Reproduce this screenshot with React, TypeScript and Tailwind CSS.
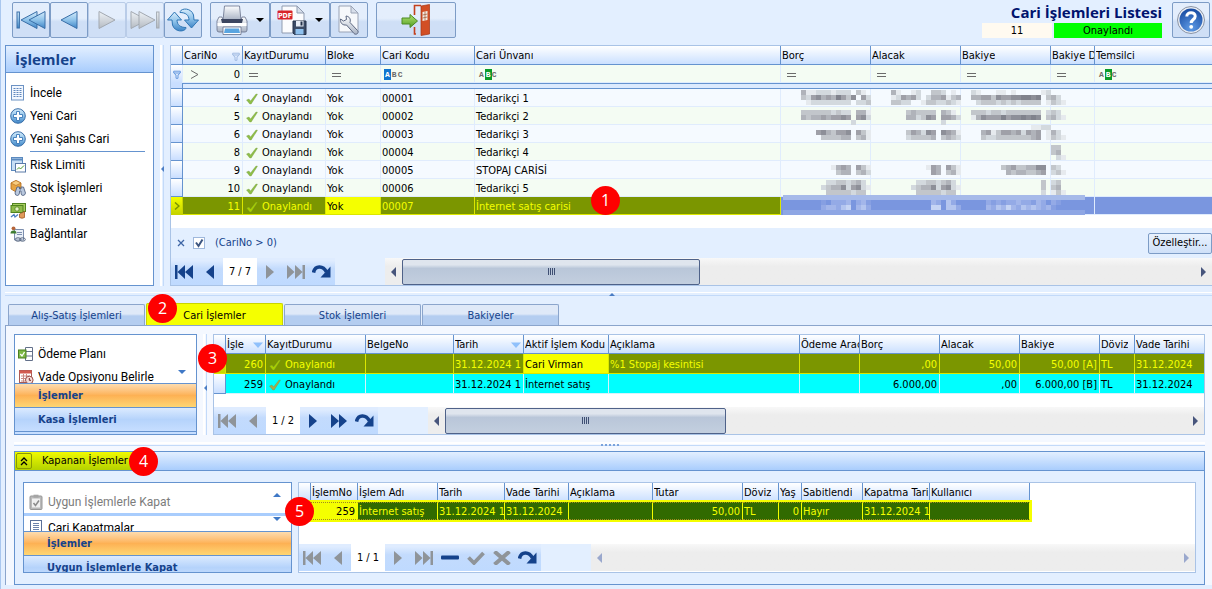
import clsx from "clsx";
import type { ReactNode } from "react";

type Children = { children?: ReactNode };

/* ---------- icons ---------- */

const Check = ({ className = "text-[#8fbf48]" }: { className?: string }) => (
  <svg viewBox="0 0 12 12" className={clsx("size-3 shrink-0", className)}>
    <path d="M.5 7 L3 6 L4.500 8 L10 1 L11.500 1.200 L5.200 11 L3.800 11 Z" fill="currentColor" stroke="#6b8f3a" strokeOpacity=".45" strokeWidth=".7" />
  </svg>
);

const Funnel = ({ className }: { className?: string }) => (
  <svg viewBox="0 0 8 9" className={clsx("w-2 h-[9px] shrink-0", className)}>
    <path d="M.7 1.2 H7.3 V3 L5 5 V8.3 H3 V5 L.7 3 Z M1 3 H7" fill="#dbe8fb" stroke="currentColor" strokeWidth=".9" />
  </svg>
);

const SortDown = () => (
  <svg viewBox="0 0 10 6" className="w-2.5 h-1.5 shrink-0">
    <path d="M0 .5 H10 L5 6 Z" fill="#8fc0fb" />
  </svg>
);

const NavFirst = () => (
  <svg viewBox="0 0 18 14" className="w-[18px] h-3.5" fill="currentColor">
    <path d="M0 0 H2.500 V14 H0 Z M10 0 V14 L2.500 7 Z M18 0 V14 L10 7 Z" />
  </svg>
);
const NavPrev = () => (
  <svg viewBox="0 0 8 14" className="w-2 h-3.5" fill="currentColor">
    <path d="M8 0 V14 L0 7 Z" />
  </svg>
);
const NavNext = () => (
  <svg viewBox="0 0 8 14" className="w-2 h-3.5" fill="currentColor">
    <path d="M0 0 V14 L8 7 Z" />
  </svg>
);
const NavFast = () => (
  <svg viewBox="0 0 16 14" className="w-4 h-3.5" fill="currentColor">
    <path d="M0 0 V14 L8 7 Z M8 0 V14 L16 7 Z" />
  </svg>
);
const NavLast = () => (
  <svg viewBox="0 0 18 14" className="w-[18px] h-3.5" fill="currentColor">
    <path d="M18 0 H15.500 V14 H18 Z M0 0 V14 L7.500 7 Z M8 0 V14 L15.500 7 Z" />
  </svg>
);
const NavUndo = () => (
  <svg viewBox="0 0 20 14" className="w-5 h-3.5">
    <path d="M1.500 7.500 C3 .5 11 0 14.500 7" fill="none" stroke="currentColor" strokeWidth="3.600" />
    <path d="M18.500 1.500 V12.500 H8.500 Z" fill="currentColor" />
  </svg>
);
const NavMinus = () => (
  <svg viewBox="0 0 18 14" className="w-[18px] h-3.5">
    <rect y="4.500" width="18" height="4" rx="1" fill="currentColor" />
  </svg>
);
const NavCheck = () => (
  <svg viewBox="0 0 18 14" className="w-[18px] h-3.5">
    <path d="M1.500 6.500 L7 12 L16.500 2" fill="none" stroke="currentColor" strokeWidth="3.800" />
  </svg>
);
const NavCross = () => (
  <svg viewBox="0 0 18 14" className="w-[18px] h-3.5">
    <path d="M1.500 .5 L16.500 13.500 M16.500 .5 L1.500 13.500" stroke="currentColor" strokeWidth="4" />
  </svg>
);

/* shared fills for the bigger drawings */
const Defs = () => (
  <svg className="absolute w-0 h-0" aria-hidden="true">
    <defs>
      <linearGradient id="blue" x1="0" y1="0" x2="0" y2="1">
        <stop offset="0" stopColor="#d6ecfb" />
        <stop offset=".5" stopColor="#8fc3ea" />
        <stop offset="1" stopColor="#3d84c6" />
      </linearGradient>
      <linearGradient id="gray" x1="0" y1="0" x2="0" y2="1">
        <stop offset="0" stopColor="#eef2f6" />
        <stop offset="1" stopColor="#b4bac2" />
      </linearGradient>
      <linearGradient id="steel" x1="0" y1="0" x2="0" y2="1">
        <stop offset="0" stopColor="#fdfeff" />
        <stop offset="1" stopColor="#a9b3c4" />
      </linearGradient>
      <linearGradient id="green" x1="0" y1="0" x2="0" y2="1">
        <stop offset="0" stopColor="#b4e36f" />
        <stop offset="1" stopColor="#4f9e24" />
      </linearGradient>
      <radialGradient id="globe" cx=".5" cy=".85" r=".8">
        <stop offset="0" stopColor="#5f9be6" />
        <stop offset="1" stopColor="#1b4fa5" />
      </radialGradient>
    </defs>
  </svg>
);

const BigFirst = () => (
  <svg viewBox="0 0 30 20" className="w-[30px] h-5" fill="url(#blue)" stroke="#3a6fa8" strokeWidth="1">
    <rect x="1" y="2" width="2.400" height="16" />
    <path d="M21 1.500 V18.500 L5 10 Z" />
    <path d="M29 1.500 V18.500 L13 10 Z" />
  </svg>
);
const BigPrev = () => (
  <svg viewBox="0 0 18 20" className="w-[18px] h-5" fill="url(#blue)" stroke="#3a6fa8" strokeWidth="1">
    <path d="M17 1.500 V18.500 L1 10 Z" />
  </svg>
);
const BigNext = () => (
  <svg viewBox="0 0 18 20" className="w-[18px] h-5" fill="url(#gray)" stroke="#a3a9b1" strokeWidth="1">
    <path d="M1 1.500 V18.500 L17 10 Z" />
  </svg>
);
const BigLast = () => (
  <svg viewBox="0 0 30 20" className="w-[30px] h-5" fill="url(#gray)" stroke="#a3a9b1" strokeWidth="1">
    <path d="M1 1.500 V18.500 L17 10 Z" />
    <path d="M9 1.500 V18.500 L25 10 Z" />
    <rect x="26.600" y="2" width="2.400" height="16" />
  </svg>
);
const Refresh = () => (
  <svg viewBox="0 0 32 26" className="w-8 h-[26px]" fill="url(#blue)" stroke="#2f76b5" strokeWidth="1">
    <path d="M13 5.500 C13 1 24 0 26.500 8 L27 13 H31.500 L24.500 21 L17.500 13 H22 C22 8 18.500 5.500 13 5.500 Z" />
    <path d="M19 20.500 C19 25 8 26 5.500 18 L5 13 H.5 L7.500 5 L14.500 13 H10 C10 18 13.500 20.500 19 20.500 Z" />
  </svg>
);
const Printer = () => (
  <svg viewBox="0 0 32 30" className="w-8 h-[30px]" stroke="#66708a" strokeWidth=".8">
    <path d="M8.500 1 H23.500 L25 15 H7 Z" fill="url(#steel)" />
    <path d="M3 12 H6 L7 15 H25 L26 12 H29 L31 16 V25 Q31 27 29 27 H3 Q1 27 1 25 V16 Z" fill="url(#steel)" />
    <path d="M5 14 H27 L26 18 H6 Z" fill="#3c4660" stroke="none" />
    <path d="M1.500 18 H30.500 V21 H1.500 Z" fill="#fff" stroke="none" />
    <path d="M7 22 H25 V29.500 H7 Z" fill="#fff" />
    <path d="M9 23.500 H23 L24 28 H8 Z" fill="#5aa5e0" stroke="none" />
  </svg>
);
const PdfSave = () => (
  <svg viewBox="0 0 30 30" className="w-[30px] h-[30px]">
    <path d="M5 1 H20 L27 8 V28 H5 Z" fill="#fbfcfe" stroke="#8f9bb0" />
    <path d="M20 1 V8 H27 Z" fill="#d7deea" stroke="#8f9bb0" />
    <rect x=".5" y="5.500" width="15" height="9" rx="1" fill="#d8232a" />
    <text x="8" y="12.600" textAnchor="middle" className="text-[7px] font-bold" fill="#fff">PDF</text>
    <path d="M16 16 H29 V29.500 H17.500 L16 28 Z" fill="#3b4b66" stroke="#24324a" />
    <rect x="19" y="16" width="7.500" height="5.500" fill="#e7edf6" />
    <rect x="18.500" y="24" width="8" height="5.500" fill="#8fc1ee" />
    <rect x="23.500" y="16.500" width="2" height="4" fill="#24324a" />
  </svg>
);
const PageTool = () => (
  <svg viewBox="0 0 22 30" className="w-[22px] h-[30px]">
    <path d="M1 1 H13 L20 8 V27 H1 Z" fill="#f6f8fb" stroke="#9aa3b5" />
    <path d="M13 1 V8 H20 Z" fill="#d7deea" stroke="#9aa3b5" />
    <path d="M8 11 L8.500 14.500 L5.500 16 L2.500 14 C2 18 4.500 20.500 8.500 20 L16 28.500 C18 30.500 21.500 28 19.500 25.500 L12 17.500 C13 14 11.500 11.500 8 11 Z" fill="url(#steel)" stroke="#5c6781" />
  </svg>
);
const ExitDoor = () => (
  <svg viewBox="0 0 30 32" className="w-[30px] h-8">
    <path d="M13.500 11 V1.500 H20 M13.500 23 V30 H15" fill="none" stroke="#c4401d" strokeWidth="1.600" />
    <path d="M20 2 L28.500 .5 V30 L20 31.500 Z" fill="#d24f25" stroke="#a83512" strokeWidth=".7" />
    <path d="M21.500 8 L26.500 7 V16 L21.500 17 Z" fill="#f2efe6" />
    <path d="M24 7.500 V16.500 M21.500 11 L26.500 10 M21.500 14 L26.500 13" stroke="#a8623f" strokeWidth=".8" />
    <path d="M1 14 H9 V10.500 L16.500 17 L9 23.500 V20 H1 Z" fill="url(#green)" stroke="#4c8a22" />
  </svg>
);
const Help = () => (
  <svg viewBox="0 0 30 30" className="w-[30px] h-[30px]">
    <circle cx="15" cy="15" r="13.500" fill="#e9edf3" stroke="#8a94a6" />
    <circle cx="15" cy="15" r="11.500" fill="url(#globe)" />
    <path d="M10.800 11.500 C10.800 6.500 19.200 6.500 19.200 11.200 C19.200 14.500 15.200 14.500 15.200 18" fill="none" stroke="#fff" strokeWidth="3" />
    <circle cx="15.200" cy="21.800" r="1.900" fill="#fff" />
  </svg>
);

const SheetIcon = () => (
  <svg viewBox="0 0 16 16" className="w-4 h-4">
    <rect x="1.500" y=".5" width="12" height="14.500" fill="#f3f8ff" stroke="#6d93c4" />
    <path d="M3.500 3.500 H12 M3.500 5.500 H12 M3.500 7.500 H12 M3.500 9.500 H12 M3.500 11.500 H12" stroke="#5f87bd" strokeDasharray="2 1" />
  </svg>
);
const PlusIcon = () => (
  <svg viewBox="0 0 16 16" className="w-4 h-4">
    <circle cx="8" cy="8" r="7.300" fill="url(#blue)" stroke="#3b6fa8" />
    <path d="M6.500 3.500 H9.500 V6.500 H12.500 V9.500 H9.500 V12.500 H6.500 V9.500 H3.500 V6.500 H6.500 Z" fill="#fff" stroke="#3b78b8" strokeWidth=".9" />
  </svg>
);
const RiskIcon = () => (
  <svg viewBox="0 0 16 16" className="w-4 h-4">
    <rect x="1.500" y=".5" width="11" height="13" fill="#c7def5" stroke="#5b8abf" />
    <path d="M1.500 2.500 H12.500" stroke="#5b8abf" strokeWidth="2" />
    <rect x="5.500" y="6.500" width="10" height="8.500" fill="#fff" stroke="#5b7ba8" />
    <path d="M7 12.500 L9 10.500 L10.500 12 L14 8.500" fill="none" stroke="#4a9a2c" />
  </svg>
);
const StockIcon = () => (
  <svg viewBox="0 0 16 16" className="w-4 h-4">
    <path d="M1 3 L6 .5 L11 3 V9 L6 12 L1 9 Z" fill="#e7a443" stroke="#b06a1c" strokeWidth=".8" />
    <path d="M1 3 L6 5.500 L11 3 L6 .5 Z" fill="#f8cd80" stroke="#b06a1c" strokeWidth=".6" />
    <path d="M5 13 L7 7 H9.500 V9 H11 V7 H13.500 L15.500 13 Q15 15.500 13 15.500 Q11 15.500 11 13 V11 H9.500 V13 Q9 15.500 7.500 15.500 Q5 15.500 5 13 Z" fill="#b9c8de" stroke="#48597a" strokeWidth=".8" />
  </svg>
);
const MoneyIcon = () => (
  <svg viewBox="0 0 16 16" className="w-4 h-4">
    <rect x="2.500" y=".5" width="13" height="8" fill="#a9cf62" stroke="#51831f" />
    <rect x="1" y="2.500" width="12" height="7" fill="#8fbb49" stroke="#51831f" />
    <circle cx="7" cy="6" r="2.200" fill="#e6f3c4" stroke="#51831f" strokeWidth=".8" />
    <path d="M1 14 L4 11.500 L5 14 L8 11.500" fill="none" stroke="#4a7cc0" strokeWidth="1.300" />
    <path d="M9.500 11 V14.500 Q12 16 14.500 14.500 V8.500 Q12 10 9.500 11" fill="#e09a5c" stroke="#a35a25" strokeWidth=".8" />
  </svg>
);
const LinkIcon = () => (
  <svg viewBox="0 0 16 16" className="w-4 h-4">
    <path d="M4.500 3.500 H13.500 V14 H4.500 Z" fill="#eaf0f8" stroke="#7d8fae" />
    <path d="M7 6.500 H12 M7 8.500 H12" stroke="#7d8fae" />
    <circle cx="3.500" cy="2.300" r="1.900" fill="#b5653a" />
    <path d="M.5 7.500 Q.5 4.500 3.500 4.500 Q6.500 4.500 6.500 7.500 Z" fill="#3e7d32" />
    <ellipse cx="8" cy="13.500" rx="2.800" ry="1.700" fill="none" stroke="#56657f" />
    <ellipse cx="12.500" cy="13.500" rx="2.800" ry="1.700" fill="none" stroke="#56657f" />
  </svg>
);
const PlanIcon = () => (
  <svg viewBox="0 0 16 16" className="w-4 h-4">
    <path d="M7.500 1.500 H14.500 V14.500 H7.500 Z M7.500 5.500 H14.500 M7.500 10 H14.500" fill="#fff" stroke="#63708a" />
    <rect x=".5" y="4" width="7.500" height="8" fill="#7db844" stroke="#4b7f22" />
    <path d="M2.300 8 L4 10 L6.500 6" fill="none" stroke="#fff" strokeWidth="1.300" />
  </svg>
);
const CalendarIcon = () => (
  <svg viewBox="0 0 16 16" className="w-4 h-4">
    <rect x="1.500" y="1.500" width="12" height="12" fill="#fff" stroke="#a95b55" />
    <path d="M1.500 3 H13.500" stroke="#d25b50" strokeWidth="3" />
    <path d="M3 7 H12 M3 9.500 H8 M3 12 H7 M5.500 5 V13 M8.500 5 V9" stroke="#c98a84" />
    <circle cx="11.300" cy="11" r="3.800" fill="#f4dcd9" stroke="#9c4a45" />
    <path d="M11.300 9 V11.300 H13" fill="none" stroke="#7a2a26" />
  </svg>
);
const ClipIcon = () => (
  <svg viewBox="0 0 16 16" className="w-4 h-4">
    <rect x="2" y="2" width="12" height="13.500" rx="1" fill="#b9b9b9" stroke="#979797" />
    <rect x="4" y="4.500" width="8" height="9" fill="#f0f0f0" />
    <rect x="5.500" y=".7" width="5" height="3" fill="#a5a5a5" />
    <path d="M5.500 9 L7.500 11.500 L11 6.500" fill="none" stroke="#8b8b8b" strokeWidth="1.500" />
  </svg>
);
const PageIcon = () => (
  <svg viewBox="0 0 16 16" className="w-4 h-4">
    <rect x="2.500" y=".5" width="11" height="15" fill="#fff" stroke="#5a7099" />
    <path d="M5 3.500 H11 M5 5.500 H11 M5 7.500 H11 M5 9.500 H11 M5 11.500 H11" stroke="#6c82ab" />
  </svg>
);

/* ---------- small parts ---------- */

const ToolButton = ({ label, wide, off, className, children }: Children & { label: string; wide?: boolean; off?: boolean; className?: string }) => (
  <button
    aria-label={label}
    disabled={off}
    className={clsx(
      "h-9 flex items-center justify-center gap-2 rounded-[2px] border bg-linear-to-b from-[#e4eefc] from-45% to-[#cfdff6] to-55%",
      off ? "border-[#b9cce8]" : "border-[#7d9cc6]",
      wide ? "w-[60px]" : "w-[38px]",
      className
    )}
  >
    {children}
  </button>
);

const Caret = () => <span className="border-x-4 border-x-transparent border-t-4 border-t-black" />;

const Badge = ({ className, children }: Children & { className: string }) => (
  <span className={clsx("absolute z-10 size-[29px] rounded-full bg-[#fe0000] text-white text-base leading-[29px] text-center font-['Open_Sans',sans-serif]", className)}>
    {children}
  </span>
);

const SplitterV = () => (
  <div className="relative w-1 mx-1.5 shrink-0 border-l-2 border-l-white border-r border-r-[#c3daf9]">
    <span className="absolute top-1/2 -left-px border-y-[3px] border-y-transparent border-r-[3px] border-r-[#4a7dc4]" />
  </div>
);

const ListItem = ({ icon, off, children }: Children & { icon: ReactNode; off?: boolean }) => (
  <button disabled={off} className={clsx("h-[23px] flex items-center gap-1 text-left font-['Roboto','Noto_Sans',sans-serif] text-[12px] whitespace-nowrap shrink-0", off ? "text-[#7c7c7c]" : "text-black")}>
    {icon}
    <span>{children}</span>
  </button>
);

const GroupButton = ({ active, children }: Children & { active?: boolean }) => (
  <button
    className={clsx(
      "h-6 shrink-0 w-full border-t border-[#6593cf] pl-[23px] text-left text-[11px] font-bold text-[#15428b] bg-linear-to-b",
      active ? "from-[#fddcae] from-0% via-[#fdb154] via-50% to-[#fed673]" : "from-[#dcebff] from-0% via-[#b5d3fb] via-50% to-[#c6deff]"
    )}
  >
    {children}
  </button>
);

const NavButton = ({ label, off, children }: Children & { label: string; off?: boolean }) => (
  <button aria-label={label} disabled={off} className={clsx("w-[26px] h-full flex items-center justify-center", off ? "text-[#8f9499]" : "text-[#15428b]")}>
    {children}
  </button>
);

const ScrollBar = ({ thumb, off }: { thumb?: string; off?: boolean }) => {
  const arrow = off ? "text-[#9aa8cd]" : "text-[#47557c]";
  return (
    <div className={clsx("flex-1 flex items-center bg-linear-to-b from-[#f8f8f8] to-[#ededed] to-30%", arrow)}>
      <button aria-label="Sola kaydır" className="w-[17px] flex justify-center">
        <span className="border-y-[5px] border-y-transparent border-r-[5px] border-r-current" />
      </button>
      <div className="flex-1">
        {thumb && (
          <div className={clsx("h-[26px] rounded-[2px] border border-[#4f6289] bg-linear-to-b from-[#dfe5ee] from-20% via-[#b9c6d9] via-35% to-[#c3cfdf] flex items-center justify-center gap-px", thumb)}>
            {[0, 1, 2, 3].map((i) => (
              <span key={i} className="w-px h-[7px] bg-[#3f4f73]" />
            ))}
          </div>
        )}
      </div>
      <button aria-label="Sağa kaydır" className="w-[17px] flex justify-center">
        <span className="border-y-[5px] border-y-transparent border-l-[5px] border-l-current" />
      </button>
    </div>
  );
};

const NavBar = ({ page, back, forward, edit, thumb }: { page: string; back?: boolean; forward?: "on" | "off"; edit?: boolean; thumb?: string }) => (
  <div className="h-[27px] flex bg-[#e3efff]">
    <div className="flex bg-linear-to-b from-[#dfecff] from-10% via-[#c3dbfd] via-40% to-[#bfdaff]">
      <NavButton label="İlk" off={!back}><NavFirst /></NavButton>
      <NavButton label="Önceki" off={!back}><NavPrev /></NavButton>
      <span className="w-[34px] bg-white text-center leading-[27px]">{page}</span>
      <NavButton label="Sonraki" off={forward !== "on"}><NavNext /></NavButton>
      <NavButton label="Son" off={forward !== "on"}>{forward === "on" ? <NavFast /> : <NavLast />}</NavButton>
      {edit && (
        <>
          <NavButton label="Sil"><NavMinus /></NavButton>
          <NavButton label="Kaydet" off><NavCheck /></NavButton>
          <NavButton label="Vazgeç" off><NavCross /></NavButton>
        </>
      )}
      <NavButton label="Geri al"><NavUndo /></NavButton>
    </div>
    <div className="w-[50px]" />
    <ScrollBar thumb={thumb} off={edit} />
  </div>
);

const Th = ({ className, icon, children }: Children & { className?: string; icon?: ReactNode }) => (
  <th className={clsx("h-[19px] p-0 pl-px pt-0.5 border-r border-b border-[#6593cf] bg-linear-to-b from-white to-[#cbe0ff] text-left font-normal overflow-hidden", className)}>
    <div className={clsx("flex items-center justify-between", icon && "pr-0.5")}>
      <span className="overflow-hidden whitespace-nowrap">{children}</span>
      {icon}
    </div>
  </th>
);

const RowHead = ({ on }: { on?: boolean }) => (
  <td className={clsx("p-0 border-r border-b", on ? "border-[#c9d400] bg-linear-to-b from-[#f3ff00] to-[#c6d400]" : "border-[#6593cf] bg-linear-to-b from-white to-[#c9deff]")}>
    {on && (
      <svg viewBox="0 0 6 8" className="w-1.5 h-2 mx-auto">
        <path d="M1 .5 L5 4 L1 7.500" fill="none" stroke="#7b9600" strokeWidth="1.500" />
      </svg>
    )}
  </td>
);

const Td = ({ className, right, children }: Children & { className?: string; right?: boolean }) => (
  <td className={clsx("p-0 pt-0.5 pl-px border-r border-b overflow-hidden whitespace-nowrap", right && "text-right pr-0.5", className)}>{children}</td>
);

const Status = ({ className }: { className?: string }) => (
  <span className="flex items-center gap-1 pl-0.5">
    <Check className={className} />
    Onaylandı
  </span>
);

const FilterText = ({ mode }: { mode: "starts" | "contains" }) => (
  <span className="flex items-center ml-0.5 font-['Liberation_Mono',monospace] text-[8px] leading-[11px] font-bold text-[#6a6a6a]">
    <span className={clsx("px-px", mode === "starts" && "bg-[#0f74d0] text-white")}>A</span>
    <span className={clsx("px-px", mode === "contains" && "bg-[#0a9a2a] text-white")}>B</span>
    <span>C</span>
  </span>
);

const Equals = () => <span className="block ml-[5px] w-[9px] h-1 border-y border-[#6b6b6b]" />;

/* ---------- customer grid ---------- */

const accounts = [
  { no: 4, code: "00001", title: "Tedarikçi 1" },
  { no: 5, code: "00002", title: "Tedarikçi 2" },
  { no: 6, code: "00003", title: "Tedarikçi 3" },
  { no: 8, code: "00004", title: "Tedarikçi 4" },
  { no: 9, code: "00005", title: "STOPAJ CARİSİ" },
  { no: 10, code: "00006", title: "Tedarikçi 5" },
];

// amounts are masked: each line is [block row, block column, shades], one digit per 5px block
const mask: [number, number, string][] = [
  [0, 4, "41122212220310"], [1, 4, "32564547536052"], [2, 4, "01222222220223"],
  [0, 22, "41001200332010"], [1, 22, "12545202445134"], [2, 22, "33220013322321"],
  [0, 38, "2100011010000012000"], [1, 38, "4455365566776703420"], [2, 38, "0233323232333301321"],
  [4, 4, "33333323220441"], [5, 4, "43445455650562"], [6, 4, "00000000002000"],
  [4, 25, "34333304310"], [5, 25, "44236505542"], [6, 25, "00000002000"],
  [4, 38, "3332332333333302320"], [5, 38, "1465557566767603421"],
  [8, 7, "56435560531"], [9, 7, "03333440341"],
  [7, 52, "22"],
  [8, 25, "35426506541"], [9, 25, "23333403432"],
  [7, 50, "1122"], [8, 40, "45135545254501420"], [9, 40, "32233333334501321"],
  [11, 54, "33"], [12, 54, "34"], [13, 54, "021"],
  [15, 10, "14540531"], [16, 10, "03440342"],
  [15, 29, "1540531"], [16, 29, "0540341"],
  [15, 44, "3453344660320"], [16, 44, "0434433450231"],
  [18, 8, "0223323420"], [19, 8, "2344625621"], [20, 8, "0333332330"],
  [18, 26, "0223323420"], [19, 26, "2344625621"], [20, 26, "0333332330"],
  [18, 52, "30230"], [19, 52, "30340"], [20, 52, "20131"],
];
const selectedMask: [number, number, string][] = [
  [22, 8, "1022230231"], [23, 8, "2332450342"], [22, 30, "320420"], [23, 30, "550442"],
  [22, 41, "2121223221320210"], [23, 41, "3243532434323100"],
];
const grays = ["", "#e6eaee", "#d3d9de", "#c2c6cb", "#b0b3ba", "#9fa0a8", "#8d8f98", "#80828c"];
const blues = ["", "#869fe2", "#94aae6", "#a3b6ea", "#b4c5ef", "#c6d4f4"];

const Blocks = ({ lines, shades }: { lines: [number, number, string][]; shades: string[] }) => (
  <>
    {lines.map(([row, col, line]) =>
      [...line].map((s, i) =>
        s === "0" ? null : <rect key={`${row}-${col}-${i}`} x={(col + i) * 5} y={row * 5} width="5" height="5" fill={shades[Number(s)]} />
      )
    )}
  </>
);

const Mosaic = () => (
  <svg viewBox="0 0 305 125" className="absolute left-[610px] top-11 w-[305px] h-[125px] pointer-events-none" shapeRendering="crispEdges">
    <Blocks lines={mask} shades={grays} />
    <rect x="2" y="105" width="302" height="5" fill="#a6bae9" />
    <rect x="2" y="120" width="302" height="5" fill="#8ea6e4" />
    <Blocks lines={selectedMask} shades={blues} />
  </svg>
);

const AccountGrid = () => (
  <section className="relative flex-1 min-w-0 border-l border-y border-[#a9c3e6] bg-white">
    <table className="w-full table-fixed border-separate border-spacing-0">
      <colgroup>
        <col className="w-3" />
        <col className="w-[60px]" />
        <col className="w-[83px]" />
        <col className="w-[55px]" />
        <col className="w-[94px]" />
        <col className="w-[306px]" />
        <col className="w-[90px]" />
        <col className="w-[90px]" />
        <col className="w-[90px]" />
        <col className="w-11" />
        <col />
      </colgroup>
      <thead>
        <tr>
          <Th />
          <Th icon={<Funnel className="text-[#9db8e0]" />}>CariNo</Th>
          <Th>KayıtDurumu</Th>
          <Th>Bloke</Th>
          <Th>Cari Kodu</Th>
          <Th>Cari Ünvanı</Th>
          <Th>Borç</Th>
          <Th>Alacak</Th>
          <Th>Bakiye</Th>
          <Th>Bakiye D</Th>
          <Th className="border-r-0">Temsilci</Th>
        </tr>
      </thead>
      <tbody>
        <tr className="h-[18px] bg-[#f4fcf3] *:border-[#e0ecfd]">
          <td className="p-0 border-r border-r-[#6593cf] bg-linear-to-b from-white to-[#c9deff]">
            <Funnel className="mx-auto text-[#5d94dc]" />
          </td>
          <Td>
            <div className="flex items-center justify-between pl-1.5 pr-0.5">
              <svg viewBox="0 0 9 9" className="w-[9px] h-[9px]">
                <path d="M1 .5 L8 4.500 L1 8.500" fill="none" stroke="#6b6b6b" />
              </svg>
              <input aria-label="CariNo filtresi" defaultValue="0" className="w-8 h-3.5 text-right bg-transparent outline-none" />
            </div>
          </Td>
          <Td><Equals /></Td>
          <Td><Equals /></Td>
          <Td><FilterText mode="starts" /></Td>
          <Td><FilterText mode="contains" /></Td>
          <Td><Equals /></Td>
          <Td><Equals /></Td>
          <Td><Equals /></Td>
          <Td><Equals /></Td>
          <Td className="border-r-0"><FilterText mode="contains" /></Td>
        </tr>
        <tr className="h-1.5">
          <td className="p-0 border-r border-b border-[#6593cf] bg-[#c9deff]" />
          <td colSpan={10} className="p-0 border-y border-[#6593cf] bg-[#dceafe]" />
        </tr>
        {accounts.map((a, i) => (
          <tr key={a.no} className={clsx("h-[18px] *:not-first:border-[#e0ecfd]", i % 2 ? "bg-[#f4fcf3]" : "bg-[#f5faff]")}>
            <RowHead />
            <Td right>{a.no}</Td>
            <Td><Status /></Td>
            <Td>Yok</Td>
            <Td>{a.code}</Td>
            <Td>{a.title}</Td>
            <Td />
            <Td />
            <Td />
            <Td />
            <Td className="border-r-0" />
          </tr>
        ))}
        <tr className="h-[18px] text-[#f5ff00]">
          <RowHead on />
          <Td right className="bg-[#7b9600] border-[#dbe600]">11</Td>
          <Td className="bg-[#7b9600] border-[#dbe600]"><Status className="text-[#a9d000]" /></Td>
          <Td className="bg-[#f5ff00] border-[#dbe600] text-black">Yok</Td>
          <Td className="bg-[#7b9600] border-[#dbe600]">00007</Td>
          <Td className="bg-[#7b9600] border-[#dbe600]">İnternet satış carisi</Td>
          <Td className="bg-[#7a96df] border-[#7a96df]" />
          <Td className="bg-[#7a96df] border-[#7a96df]" />
          <Td className="bg-[#7a96df] border-[#7a96df]" />
          <Td className="bg-[#7a96df] border-[#e0ecfd]" />
          <Td className="bg-[#7a96df] border-r-0 border-[#e0ecfd]" />
        </tr>
      </tbody>
    </table>
    <Mosaic />
    <div className="h-[13px]" />
    <div className="h-[30px] pl-1.5 flex items-center gap-2 bg-[#e3efff] text-[#15428b]">
      <button aria-label="Filtreyi kaldır">
        <svg viewBox="0 0 8 8" className="size-2">
          <path d="M1 1 L7 7 M7 1 L1 7" stroke="#3e65a5" strokeWidth="1.300" />
        </svg>
      </button>
      <label className="flex items-center gap-2.5">
        <span className="relative size-3">
          <input type="checkbox" defaultChecked className="peer appearance-none block size-3 border border-[#9fb8dc] bg-white" />
          <svg viewBox="0 0 12 12" className="absolute inset-0 size-3 hidden peer-checked:block pointer-events-none">
            <path d="M3 5.500 L5.500 9 L9.500 2.500" fill="none" stroke="#3c5580" strokeWidth="2" />
          </svg>
        </span>
        (CariNo &gt; 0)
      </label>
      <button className="ml-auto h-[21px] w-16 border border-[#7d9cc6] rounded-[2px] bg-linear-to-b from-[#e9f2fe] to-[#cfe0f8] text-black">Özelleştir...</button>
    </div>
    <NavBar page="7 / 7" back forward="off" thumb="w-[298px]" />
    <Badge className="left-[420px] top-[140px]">1</Badge>
  </section>
);

/* ---------- transactions grid ---------- */

const moves = [
  { no: "260", code: "Cari Virman", note: "%1 Stopaj kesintisi", debit: ",00", credit: "50,00", balance: "50,00 [A]", on: true },
  { no: "259", code: "İnternet satış", note: "", debit: "6.000,00", credit: ",00", balance: "6.000,00 [B]", on: false },
];

const MoveGrid = () => (
  <section className="relative flex-1 min-w-0 border border-[#a9c3e6] bg-white">
    <table className="w-full table-fixed border-separate border-spacing-0">
      <colgroup>
        <col className="w-3" />
        <col className="w-10" />
        <col className="w-[100px]" />
        <col className="w-[88px]" />
        <col className="w-[70px]" />
        <col className="w-[85px]" />
        <col className="w-[191px]" />
        <col className="w-[60px]" />
        <col className="w-20" />
        <col className="w-20" />
        <col className="w-20" />
        <col className="w-[35px]" />
        <col />
      </colgroup>
      <thead>
        <tr>
          <Th />
          <Th icon={<SortDown />}>İşle</Th>
          <Th>KayıtDurumu</Th>
          <Th>BelgeNo</Th>
          <Th icon={<SortDown />}>Tarih</Th>
          <Th>Aktif İşlem Kodu</Th>
          <Th>Açıklama</Th>
          <Th>Ödeme Arac</Th>
          <Th>Borç</Th>
          <Th>Alacak</Th>
          <Th>Bakiye</Th>
          <Th>Döviz</Th>
          <Th className="border-r-0">Vade Tarihi</Th>
        </tr>
      </thead>
      <tbody>
        {moves.map((m) => (
          <tr key={m.no} className={clsx("h-5", m.on ? "bg-[#7b9600] text-[#f5ff00] *:border-[#dbe600]" : "bg-[#00ffff] *:not-first:border-[#d5f3fb]")}>
            <RowHead on={m.on} />
            <Td right>{m.no}</Td>
            <Td><Status className={m.on ? "text-[#a9d000]" : "text-[#a9a94c]"} /></Td>
            <Td />
            <Td>31.12.2024 1</Td>
            <Td className={m.on ? "bg-[#f5ff00] text-black" : ""}>{m.code}</Td>
            <Td>{m.note}</Td>
            <Td />
            <Td right>{m.debit}</Td>
            <Td right>{m.credit}</Td>
            <Td right>{m.balance}</Td>
            <Td>TL</Td>
            <Td className="border-r-0">31.12.2024</Td>
          </tr>
        ))}
      </tbody>
    </table>
    <div className="h-[13px]" />
    <NavBar page="1 / 2" forward="on" thumb="w-[281px]" />
    <Badge className="-left-4 top-[9px]">3</Badge>
  </section>
);

/* ---------- closed transactions grid ---------- */

const ClosedGrid = () => (
  <section className="relative flex-1 min-w-0 border border-[#a9c3e6] bg-white">
    <table className="w-[731px] table-fixed border-separate border-spacing-0">
      <colgroup>
        <col className="w-3" />
        <col className="w-[47px]" />
        <col className="w-20" />
        <col className="w-[67px]" />
        <col className="w-16" />
        <col className="w-[84px]" />
        <col className="w-[90px]" />
        <col className="w-9" />
        <col className="w-[23px]" />
        <col className="w-[61px]" />
        <col className="w-[67px]" />
        <col className="w-[100px]" />
      </colgroup>
      <thead>
        <tr>
          <Th />
          <Th>İşlemNo</Th>
          <Th>İşlem Adı</Th>
          <Th>Tarih</Th>
          <Th>Vade Tarihi</Th>
          <Th>Açıklama</Th>
          <Th>Tutar</Th>
          <Th>Döviz</Th>
          <Th>Yaş</Th>
          <Th>Sabitlendi</Th>
          <Th>Kapatma Tari</Th>
          <Th>Kullanıcı</Th>
        </tr>
      </thead>
      <tbody>
        <tr className="h-[18px] bg-[#316a00] text-[#f5ff00] outline-2 outline-[#f5ff00] *:border-r-[#f5ff00] *:border-t *:border-y-[#a08a20] *:[border-block-style:dotted]">
          <RowHead on />
          <Td right className="bg-[#f5ff00] text-black">259</Td>
          <Td>İnternet satış</Td>
          <Td>31.12.2024 1</Td>
          <Td>31.12.2024</Td>
          <Td />
          <Td right>50,00</Td>
          <Td>TL</Td>
          <Td right>0</Td>
          <Td>Hayır</Td>
          <Td>31.12.2024 1</Td>
          <Td />
        </tr>
      </tbody>
    </table>
    <div className="h-6" />
    <NavBar page="1 / 1" forward="off" edit />
    <Badge className="-left-[14px] top-[14px]">5</Badge>
  </section>
);

/* ---------- page ---------- */

const Toolbar = () => (
  <header className="flex items-start pl-[11px] pr-0.5 pt-0.5 pb-[7px]">
    <ToolButton label="İlk kayıt"><BigFirst /></ToolButton>
    <ToolButton label="Önceki kayıt"><BigPrev /></ToolButton>
    <ToolButton label="Sonraki kayıt" off><BigNext /></ToolButton>
    <ToolButton label="Son kayıt" off><BigLast /></ToolButton>
    <ToolButton label="Yenile"><Refresh /></ToolButton>
    <div className="flex ml-2">
      <ToolButton label="Yazdır" wide><Printer /><Caret /></ToolButton>
      <ToolButton label="PDF kaydet" wide><PdfSave /><Caret /></ToolButton>
      <ToolButton label="Ayarlar"><PageTool /></ToolButton>
    </div>
    <ToolButton label="Çıkış" className="ml-2 min-w-20"><ExitDoor /></ToolButton>
    <div className="ml-auto mr-2.5">
      <h1 className="h-[21px] leading-[21px] text-right text-[15px] font-bold text-[#00136e] font-['Open_Sans',sans-serif]">Cari İşlemleri Listesi</h1>
      <div className="flex gap-0.5 text-center text-[11px] leading-[15px]">
        <output className="w-[70px] h-[15px] bg-[#fffaf0]">11</output>
        <output className="w-[108px] h-[15px] bg-[#00ff00]">Onaylandı</output>
      </div>
    </div>
    <ToolButton label="Yardım"><Help /></ToolButton>
  </header>
);

const Tab = ({ active, children }: Children & { active?: boolean }) => (
  <button
    role="tab"
    aria-selected={!!active}
    className={clsx(
      "w-[137px] pt-0.5 border border-b-0 rounded-t-[2px]",
      active ? "h-[22px] bg-[#f5ff00] border-[#c9d400] text-black" : "h-[21px] border-[#8ba5cc] text-[#15428b] bg-linear-to-b from-[#dfe9f8] from-45% to-[#b4cdf0] to-55%"
    )}
  >
    {children}
  </button>
);

export default function App() {
  return (
    <main className="min-h-screen border-l border-[#a9c7ef] bg-[#e3efff] text-[11px] leading-[14px] text-black font-['DejaVu_Sans_Condensed','Noto_Sans',sans-serif] overflow-hidden">
      <Defs />
      <Toolbar />

      <div className="flex pl-1">
        <aside className="w-[149px] shrink-0 border border-[#6593cf] bg-white">
          <h2 className="h-[27px] pl-[9px] leading-[26px] text-[15px] font-bold text-[#15428b] border-b border-[#6593cf] bg-linear-to-b from-[#e3efff] to-[#a9cdfd] font-['Open_Sans',sans-serif]">İşlemler</h2>
          <div className="flex flex-col pt-2 pl-1">
            <ListItem icon={<SheetIcon />}>İncele</ListItem>
            <ListItem icon={<PlusIcon />}>Yeni Cari</ListItem>
            <ListItem icon={<PlusIcon />}>Yeni Şahıs Cari</ListItem>
            <hr className="mt-px mb-px ml-5 mr-2 border-[#6593cf]" />
            <ListItem icon={<RiskIcon />}>Risk Limiti</ListItem>
            <ListItem icon={<StockIcon />}>Stok İşlemleri</ListItem>
            <ListItem icon={<MoneyIcon />}>Teminatlar</ListItem>
            <ListItem icon={<LinkIcon />}>Bağlantılar</ListItem>
          </div>
        </aside>
        <SplitterV />
        <AccountGrid />
      </div>

      <div className="relative mt-1.5 ml-1 h-1 border-t border-t-white border-b border-b-[#c3daf9]">
        <span className="absolute left-1/2 top-0 border-x-[3px] border-x-transparent border-b-[3px] border-b-[#4a7dc4]" />
      </div>

      <div role="tablist" className="relative mt-[7px] pl-[7px] h-[22px] flex items-end gap-px">
        <Tab>Alış-Satış İşlemleri</Tab>
        <Tab active>Cari İşlemler</Tab>
        <Tab>Stok İşlemleri</Tab>
        <Tab>Bakiyeler</Tab>
        <Badge className="left-[147px] -top-[9px]">2</Badge>
      </div>

      <div className="ml-1 pl-2 pr-[7px] pt-2 border-l border-t border-[#8ba5cc] bg-[#f4f8ff]">
        <div className="flex">
          <aside className="relative w-[183px] h-[101px] shrink-0 flex flex-col overflow-hidden border border-[#6593cf] bg-[#c6deff]">
            <div className="h-12 shrink-0 flex flex-col pt-[7px] pl-[3px] overflow-hidden bg-white">
              <ListItem icon={<PlanIcon />}>Ödeme Planı</ListItem>
              <ListItem icon={<CalendarIcon />}>Vade Opsiyonu Belirle</ListItem>
            </div>
            <span className="absolute right-2.5 top-[35px] border-x-4 border-x-transparent border-t-4 border-t-[#3f78c6]" />
            <GroupButton active>İşlemler</GroupButton>
            <GroupButton>Kasa İşlemleri</GroupButton>
            <div className="border-t border-[#6593cf]" />
          </aside>
          <SplitterV />
          <MoveGrid />
        </div>

        <div className="mt-[7px] h-1 border-t-2 border-t-white border-b border-b-[#c3daf9] flex justify-center gap-0.5">
          {[0, 1, 2, 3, 4].map((i) => (
            <span key={i} className="size-0.5 bg-[#7ba3dc]" />
          ))}
        </div>

        <section className="mt-[5px] mb-1 border border-[#6593cf] bg-[#e3efff]">
          <div className="relative h-[19px] flex border-b border-[#6593cf] bg-linear-to-b from-[#e3efff] to-[#a9cdfd]">
            <div className="w-[118px] flex items-center gap-2.5 bg-linear-to-b from-[#f0fa00] to-[#b4d200]">
              <button aria-label="Daralt" className="size-4 ml-px rounded-[2px] border border-[#8a9b00] flex items-center justify-center">
                <svg viewBox="0 0 8 9" className="w-2 h-[9px]">
                  <path d="M1 4 L4 1 L7 4 M1 8 L4 5 L7 8" fill="none" stroke="#000" strokeWidth="1.300" />
                </svg>
              </button>
              <span className="whitespace-nowrap">Kapanan İşlemler</span>
            </div>
            <Badge className="left-[114px] -top-[5px]">4</Badge>
          </div>
          <div className="flex gap-1.5 pt-[11px] pb-[11px] px-2">
            <aside className="relative w-[269px] h-[91px] shrink-0 flex flex-col overflow-hidden border border-[#6593cf] bg-white">
              <div className="h-12 shrink-0 flex flex-col pt-[7px] pl-1 overflow-hidden">
                <ListItem off icon={<ClipIcon />}>Uygun İşlemlerle Kapat</ListItem>
                <div className="h-[3px] -ml-1 shrink-0 bg-[#a9cdfd]" />
                <ListItem icon={<PageIcon />}>Cari Kapatmalar</ListItem>
              </div>
              <span className="absolute right-2.5 top-2.5 border-x-4 border-x-transparent border-b-4 border-b-[#3f78c6]" />
              <span className="absolute right-2.5 top-[34px] border-x-4 border-x-transparent border-t-4 border-t-[#3f78c6]" />
              <GroupButton active>İşlemler</GroupButton>
              <GroupButton>Uygun İşlemlerle Kapat</GroupButton>
            </aside>
            <ClosedGrid />
          </div>
        </section>
      </div>
    </main>
  );
}
